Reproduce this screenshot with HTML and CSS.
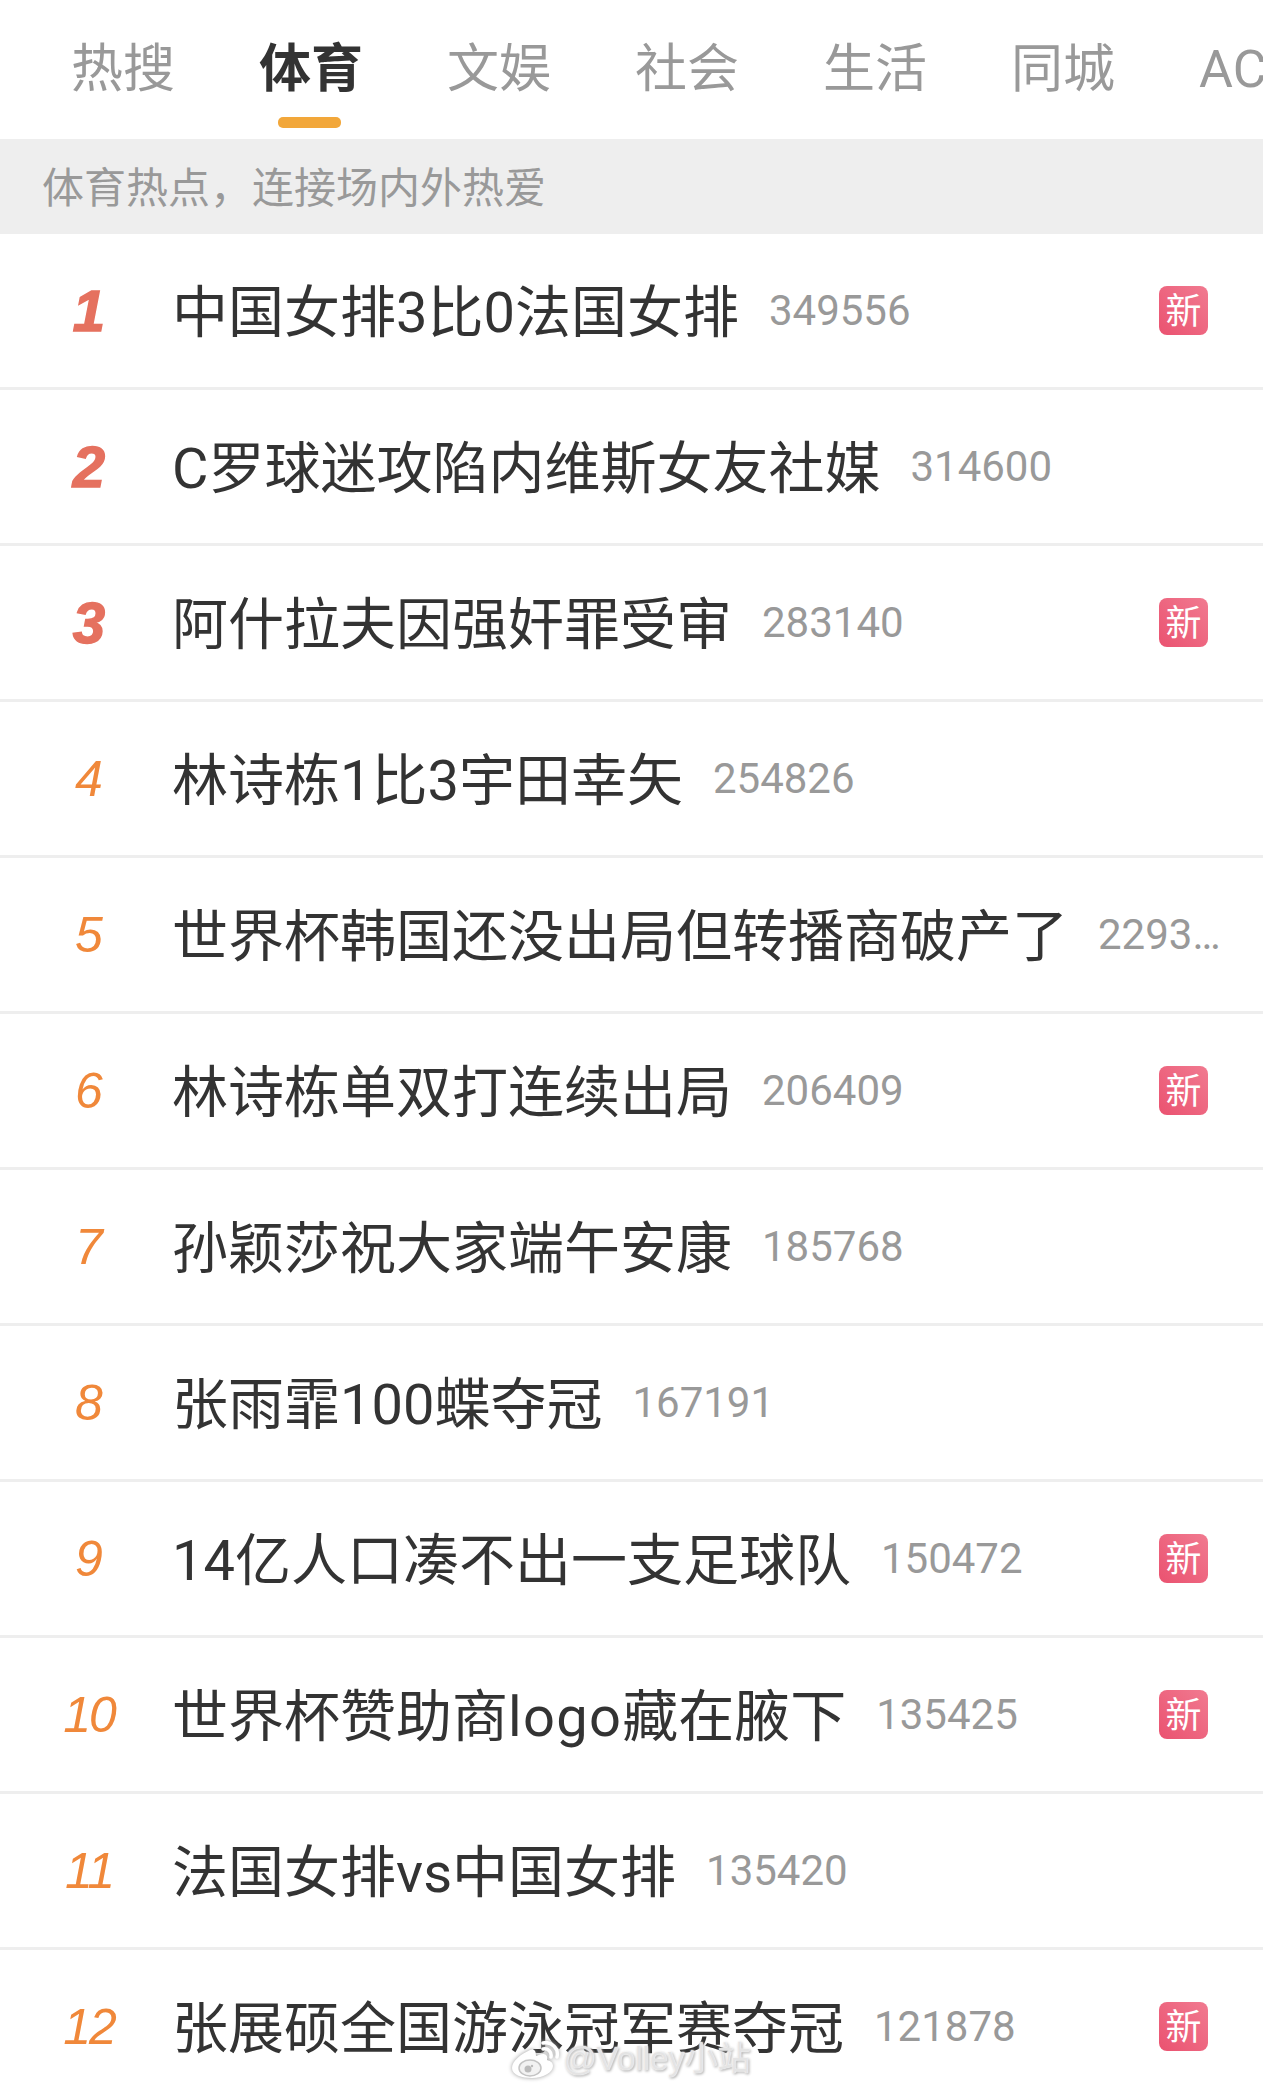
FILE: index.html
```html
<!DOCTYPE html>
<html lang="zh">

<head>
<meta charset="utf-8" />
<title>微博热搜 体育</title>
<link rel="stylesheet" href="styles.css">
</head>

<body>
<nav class="tabs">
	<a class="tab">热搜</a>
	<a class="tab active">体育</a>
	<a class="tab">文娱</a>
	<a class="tab">社会</a>
	<a class="tab">生活</a>
	<a class="tab">同城</a>
	<a class="tab">ACG</a>
</nav>
<div class="slogan">体育热点，连接场内外热爱</div>
<ul class="list">
	<li class="row top"><span class="rank">1</span><span class="title">中国女排3比0法国女排</span><span class="count">349556</span><span class="badge">新</span></li>
	<li class="row top"><span class="rank">2</span><span class="title">C罗球迷攻陷内维斯女友社媒</span><span class="count">314600</span></li>
	<li class="row top"><span class="rank">3</span><span class="title">阿什拉夫因强奸罪受审</span><span class="count">283140</span><span class="badge">新</span></li>
	<li class="row"><span class="rank">4</span><span class="title">林诗栋1比3宇田幸矢</span><span class="count">254826</span></li>
	<li class="row"><span class="rank">5</span><span class="title">世界杯韩国还没出局但转播商破产了</span><span class="count">229378</span></li>
	<li class="row"><span class="rank">6</span><span class="title">林诗栋单双打连续出局</span><span class="count">206409</span><span class="badge">新</span></li>
	<li class="row"><span class="rank">7</span><span class="title">孙颖莎祝大家端午安康</span><span class="count">185768</span></li>
	<li class="row"><span class="rank">8</span><span class="title">张雨霏100蝶夺冠</span><span class="count">167191</span></li>
	<li class="row"><span class="rank">9</span><span class="title">14亿人口凑不出一支足球队</span><span class="count">150472</span><span class="badge">新</span></li>
	<li class="row"><span class="rank wide">10</span><span class="title">世界杯赞助商<span class="latin">logo</span>藏在腋下</span><span class="count">135425</span><span class="badge">新</span></li>
	<li class="row"><span class="rank wide">11</span><span class="title">法国女排vs中国女排</span><span class="count">135420</span></li>
	<li class="row"><span class="rank wide">12</span><span class="title">张展硕全国游泳冠军赛夺冠</span><span class="count">121878</span><span class="badge">新</span></li>
</ul>
<div class="watermark">
	<svg class="mark-logo" width="50" height="38" viewBox="0 0 50 38" fill="none">
		<path d="M20 9C11 13 2 20 2 27c0 7 10 10 20 10 12 0 21-6 21-12 0-4-3-5-6-6 1-4-1-6-4-6-3 0-6 2-7 2 0-4-1-8-6-6z" fill="#fff"/>
		<ellipse cx="20" cy="27" rx="11" ry="8" fill="#f2f2f2" stroke="#c4c4c4" stroke-width="1.5"/>
		<circle cx="18" cy="28" r="3.5" fill="#bbb"/>
		<circle cx="22" cy="25" r="1.2" fill="#bbb"/>
		<path d="M33 8c5-1 9 3 8 8M33 2c9-2 16 6 14 14" stroke="#fff" stroke-width="3.5" stroke-linecap="round"/>
	</svg>
	<span class="mark-text">@Volley小站</span>
</div>
</body>

</html>
```

FILE: styles.css
```css
html, body { margin: 0; padding: 0; }
body { background: #fff; color: #333; font-family: Roboto, "Noto Sans CJK SC", sans-serif; height: 2092px; overflow: hidden; position: relative; width: 1263px; }
.tabs { align-items: flex-start; box-sizing: border-box; display: flex; gap: 84px; height: 139px; overflow: hidden; padding: 39px 0 0 71px; white-space: nowrap; }
.tab { color: #999; flex: none; font-size: 52px; line-height: 62px; position: relative; }
.tab.active { color: #333; font-weight: 700; }
.tab.active::after { background: #f2a73a; border-radius: 5px; content: ""; height: 11px; left: 19px; position: absolute; top: 78px; width: 63px; }
.slogan { background: #eee; color: #999; font-size: 42px; height: 95px; line-height: 99px; padding-left: 42px; }
.list { list-style: none; margin: 0; padding: 0; }
.row { align-items: center; border-bottom: 3px solid #eee; box-sizing: border-box; display: flex; height: 156px; padding: 0 40px 0 24px; }
.rank { color: #f0883a; flex: none; font-family: "Liberation Sans", sans-serif; font-size: 50px; font-style: italic; text-align: center; width: 130px; }
.rank.wide { letter-spacing: -2px; }
.top .rank { color: #e5715f; font-size: 58px; font-weight: 700; -webkit-text-stroke: 1.5px #e5715f; }
.title { flex: none; font-size: 56px; line-height: 78px; margin: 4px 0 0 18px; }
.latin { letter-spacing: 1.3px; }
.count { color: #999; flex: 0 1 auto; font-size: 42px; margin-left: 30px; min-width: 0; overflow: hidden; text-overflow: ellipsis; white-space: nowrap; }
.badge { background: linear-gradient(45deg, #ea5270, #f17a90); border-radius: 8px; color: #fff; flex: none; font-size: 36px; height: 49px; line-height: 53px; margin-left: auto; margin-right: 15px; text-align: center; width: 49px; }
.watermark { align-items: center; display: flex; gap: 3px; left: 510px; position: absolute; top: 2040px; }
.mark-logo { filter: drop-shadow(0 0 2px #999); }
.mark-text { color: #e4e4e4; font-family: "Liberation Sans", "Noto Sans CJK SC", sans-serif; font-size: 33px; margin-top: -8px; text-shadow: 0 0 1px #fff, 0 0 2px #fff, 1px 1px 3px #888; }
```
